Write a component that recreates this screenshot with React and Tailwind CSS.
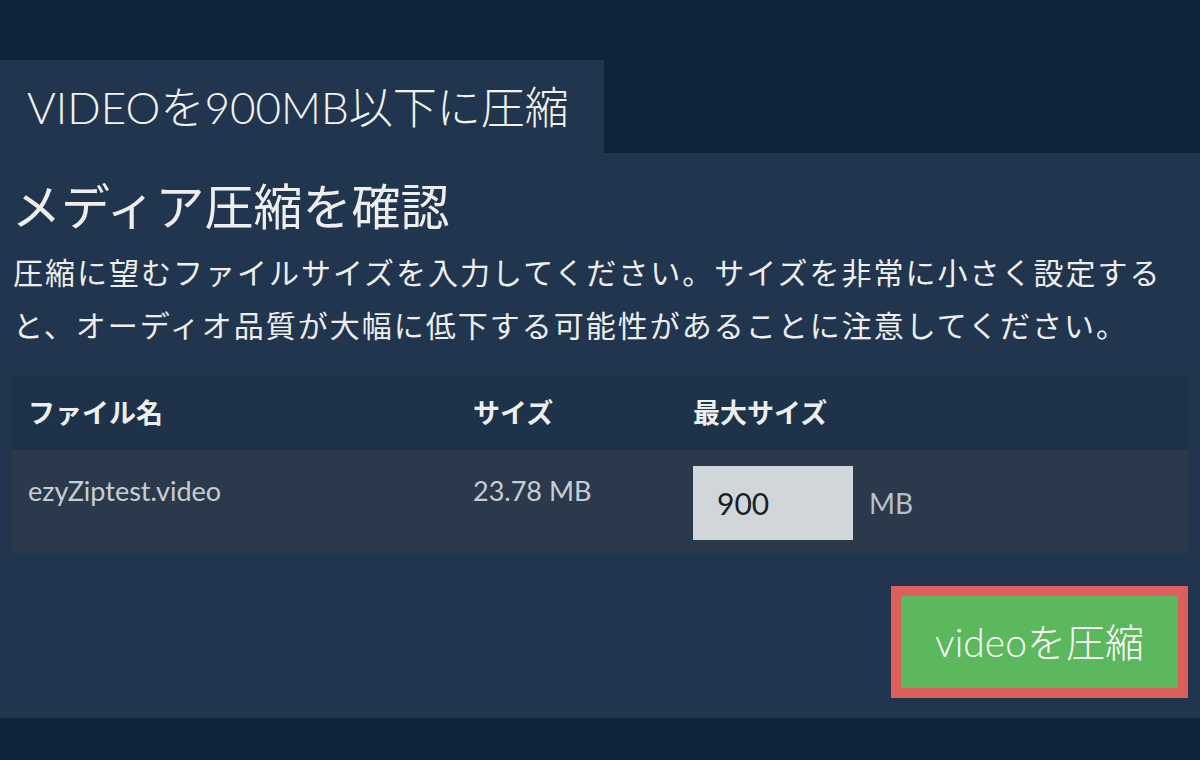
import React from "react";

const font = { fontFamily: "Lato, 'Noto Sans CJK JP', sans-serif" };

function FileTable() {
  return (
    <div className="mt-[24px] w-full">
      <div className="flex h-[74px] items-center bg-[#1e3349] text-[27px] font-bold text-[#eeeeee]">
        <div className="w-[461px] pl-[16px]">ファイル名</div>
        <div className="w-[220px]">サイズ</div>
        <div>最大サイズ</div>
      </div>
      <div className="flex h-[103px] bg-[#2a3a4c] text-[27px] text-[#c9cdd2]">
        <div className="w-[461px] pl-[16px] pt-[21px]">ezyZiptest.video</div>
        <div className="w-[220px] pt-[21px]">23.78 MB</div>
        <div className="flex items-start gap-[16px] pt-[16px]">
          <input
            type="text"
            defaultValue="900"
            className="h-[74px] w-[160px] bg-[#d1d6db] pl-[24px] text-[30px] text-[#1b1f24] outline-none"
            style={font}
          />
          <span className="mt-[16px] text-[28px] text-[#b9bfc6]">MB</span>
        </div>
      </div>
    </div>
  );
}

export default function App() {
  return (
    <div className="flex h-[760px] w-[1200px] flex-col bg-[#0f2339] pt-[60px]" style={font}>
      <div className="flex h-[93px] w-[604px] items-center bg-[#21364e] pl-[27px] text-[44px] font-light text-[#f2f2f2]">
        VIDEOを900MB以下に圧縮
      </div>
      <div className="flex h-[565px] flex-col bg-[#21364e] px-[12px]">
        <h1 className="mt-[24px] text-[49px] leading-[1.2] text-[#eeeeee]">メディア圧縮を確認</h1>
        <p className="mt-[10px] pl-[1px] text-[30px] leading-[53px] tracking-[2px] text-[#eeeeee]">
          圧縮に望むファイルサイズを入力してください。サイズを非常に小さく設定すると、オーディオ品質が大幅に低下する可能性があることに注意してください。
        </p>
        <FileTable />
        <div className="mt-[33px] flex justify-end">
          <button
            type="button"
            className="flex h-[112px] w-[297px] items-center justify-center border-[10px] border-[#dc5f5c] bg-[#5cb85c] text-[39px] font-light text-white"
          >
            videoを圧縮
          </button>
        </div>
      </div>
    </div>
  );
}
